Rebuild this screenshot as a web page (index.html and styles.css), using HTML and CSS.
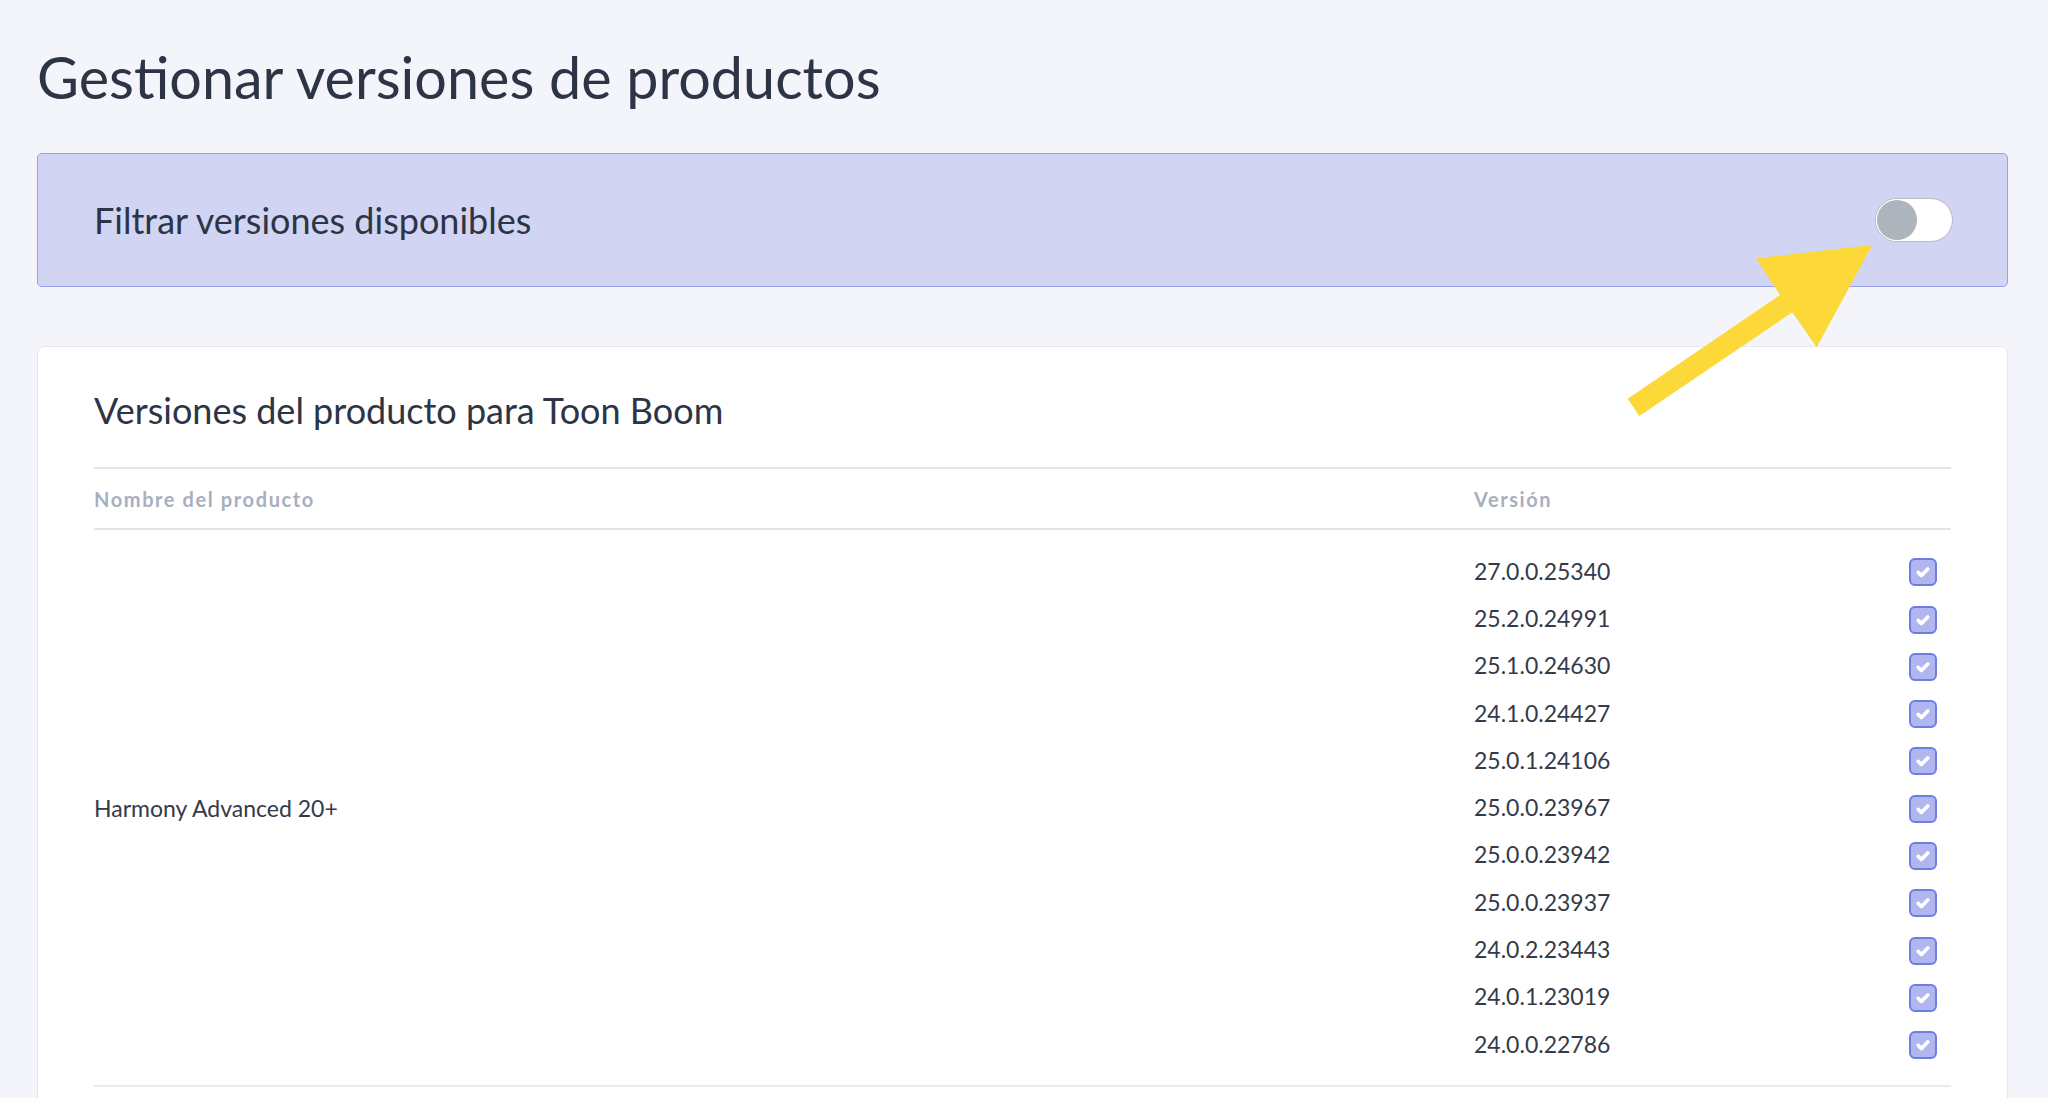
FILE: index.html
```html
<!DOCTYPE html>
<html lang="es">
<head>
    <meta charset="UTF-8">
    <meta name="viewport" content="width=device-width, initial-scale=1.0">
    <title>Gestionar versiones de productos</title>
    <link rel="stylesheet" href="styles.css">
</head>
<body>
    <main class="page">
        <h1 class="page-title">Gestionar versiones de productos</h1>

        <!-- filtro de versiones -->
        <section class="filter-panel">
            <span class="filter-label">Filtrar versiones disponibles</span>
            <label class="switch">
                <input type="checkbox" class="switch-input">
                <span class="switch-knob"></span>
            </label>
        </section>

        <section class="card">
            <h2 class="card-title">Versiones del producto para Toon Boom</h2>
            <table class="versions-table">
                <colgroup>
                    <col class="col-product">
                    <col class="col-version">
                    <col class="col-check">
                </colgroup>
                <thead>
                    <tr>
                        <th>Nombre del producto</th>
                        <th>Versión</th>
                        <th></th>
                    </tr>
                </thead>
                <tbody>
                    <tr class="first">
                        <td class="product" rowspan="11">Harmony Advanced 20+</td>
                        <td class="version">27.0.0.25340</td>
                        <td class="check"><span class="checkbox"><svg viewBox="0 0 16 16"><path d="M4.2 8.3l2.5 2.5L11.8 5.6"/></svg></span></td>
                    </tr>
                    <tr>
                        <td class="version">25.2.0.24991</td>
                        <td class="check"><span class="checkbox"><svg viewBox="0 0 16 16"><path d="M4.2 8.3l2.5 2.5L11.8 5.6"/></svg></span></td>
                    </tr>
                    <tr>
                        <td class="version">25.1.0.24630</td>
                        <td class="check"><span class="checkbox"><svg viewBox="0 0 16 16"><path d="M4.2 8.3l2.5 2.5L11.8 5.6"/></svg></span></td>
                    </tr>
                    <tr>
                        <td class="version">24.1.0.24427</td>
                        <td class="check"><span class="checkbox"><svg viewBox="0 0 16 16"><path d="M4.2 8.3l2.5 2.5L11.8 5.6"/></svg></span></td>
                    </tr>
                    <tr>
                        <td class="version">25.0.1.24106</td>
                        <td class="check"><span class="checkbox"><svg viewBox="0 0 16 16"><path d="M4.2 8.3l2.5 2.5L11.8 5.6"/></svg></span></td>
                    </tr>
                    <tr>
                        <td class="version">25.0.0.23967</td>
                        <td class="check"><span class="checkbox"><svg viewBox="0 0 16 16"><path d="M4.2 8.3l2.5 2.5L11.8 5.6"/></svg></span></td>
                    </tr>
                    <tr>
                        <td class="version">25.0.0.23942</td>
                        <td class="check"><span class="checkbox"><svg viewBox="0 0 16 16"><path d="M4.2 8.3l2.5 2.5L11.8 5.6"/></svg></span></td>
                    </tr>
                    <tr>
                        <td class="version">25.0.0.23937</td>
                        <td class="check"><span class="checkbox"><svg viewBox="0 0 16 16"><path d="M4.2 8.3l2.5 2.5L11.8 5.6"/></svg></span></td>
                    </tr>
                    <tr>
                        <td class="version">24.0.2.23443</td>
                        <td class="check"><span class="checkbox"><svg viewBox="0 0 16 16"><path d="M4.2 8.3l2.5 2.5L11.8 5.6"/></svg></span></td>
                    </tr>
                    <tr>
                        <td class="version">24.0.1.23019</td>
                        <td class="check"><span class="checkbox"><svg viewBox="0 0 16 16"><path d="M4.2 8.3l2.5 2.5L11.8 5.6"/></svg></span></td>
                    </tr>
                    <tr class="last">
                        <td class="version">24.0.0.22786</td>
                        <td class="check"><span class="checkbox"><svg viewBox="0 0 16 16"><path d="M4.2 8.3l2.5 2.5L11.8 5.6"/></svg></span></td>
                    </tr>
                </tbody>
            </table>
        </section>
    </main>

    <!-- flecha amarilla de anotación sobre el interruptor -->
    <svg class="callout-arrow" viewBox="0 0 2048 1098" width="2048" height="1098">
        <polygon points="1627.7,398.7 1780,295 1756,258.3 1872.3,245 1816.7,347.3 1792.3,312.3 1639.3,416" fill="#fcd838"/>
    </svg>
</body>
</html>
```

FILE: styles.css
```css
body {
    margin: 0;
    padding: 0;
    background-color: #f4f5fa;
    font-family: Lato, "Noto Sans", sans-serif;
    color: #2d3446;
    position: relative;
    overflow: hidden;
}

.page {
    padding: 0 40px 0 37px;
}

.page-title {
    margin: 0;
    padding-top: 43px;
    font-size: 57.5px;
    font-weight: 400;
    line-height: 68px;
}

/* panel del filtro */
.filter-panel {
    margin-top: 42px;
    height: 132px;
    display: flex;
    align-items: center;
    justify-content: space-between;
    padding: 0 54px 0 56px;
    background-color: #d1d4f2;
    border: 1px solid #98a2ea;
    border-radius: 5px;
}

.filter-label {
    font-size: 36px;
}

.switch {
    position: relative;
    display: inline-block;
    width: 78px;
    height: 44px;
}

.switch-input {
    display: none;
}

.switch-knob {
    position: absolute;
    inset: 0;
    background-color: #ffffff;
    border: 1px solid #b4b9c2;
    border-radius: 22px;
    box-sizing: border-box;
}

.switch-knob::before {
    content: "";
    position: absolute;
    left: 1px;
    top: 1px;
    width: 40px;
    height: 40px;
    border-radius: 50%;
    background-color: #adb4bc;
    box-shadow: 0 0 0 1px #ffffff;
}

/* tarjeta con la tabla */
.card {
    margin-top: 59px;
    padding: 39px 56px 40px;
    background-color: #ffffff;
    border: 1px solid #e4e7f0;
    border-radius: 7px;
}

.card-title {
    margin: 0 0 33px;
    font-size: 36px;
    font-weight: 400;
    line-height: 48px;
}

.versions-table {
    width: 100%;
    border-collapse: collapse;
    table-layout: fixed;
}

.col-product {
    width: 1380px;
}

.col-check {
    width: 70px;
}

.versions-table th {
    height: 59px;
    padding: 0;
    text-align: left;
    font-size: 20px;
    font-weight: 700;
    letter-spacing: 1.6px;
    color: #a8afbf;
    border-top: 2px solid #e1e5ee;
    border-bottom: 2px solid #e1e5ee;
}

.versions-table td {
    padding: 0;
    font-size: 23px;
    color: #343a4a;
}

.versions-table tbody {
    border-bottom: 2px solid #e8ebf2;
}

.versions-table td.product {
    vertical-align: middle;
}

.versions-table td.version,
.versions-table td.check {
    height: 47.3px;
}

.versions-table tr.first td.version,
.versions-table tr.first td.check {
    padding-top: 17px;
}

.versions-table tr.last td.version,
.versions-table tr.last td.check {
    padding-bottom: 18px;
}

.versions-table td.check {
    text-align: right;
    padding-right: 14px;
}

.checkbox {
    display: inline-flex;
    align-items: center;
    justify-content: center;
    width: 28px;
    height: 28px;
    box-sizing: border-box;
    background-color: #b0b7f0;
    border: 2px solid #6d7de0;
    border-radius: 6px;
    vertical-align: middle;
}

.checkbox svg {
    width: 20px;
    height: 20px;
    fill: none;
    stroke: #ffffff;
    stroke-width: 3;
    stroke-linecap: round;
    stroke-linejoin: round;
}

.callout-arrow {
    position: absolute;
    left: 0;
    top: 0;
    pointer-events: none;
}
```
